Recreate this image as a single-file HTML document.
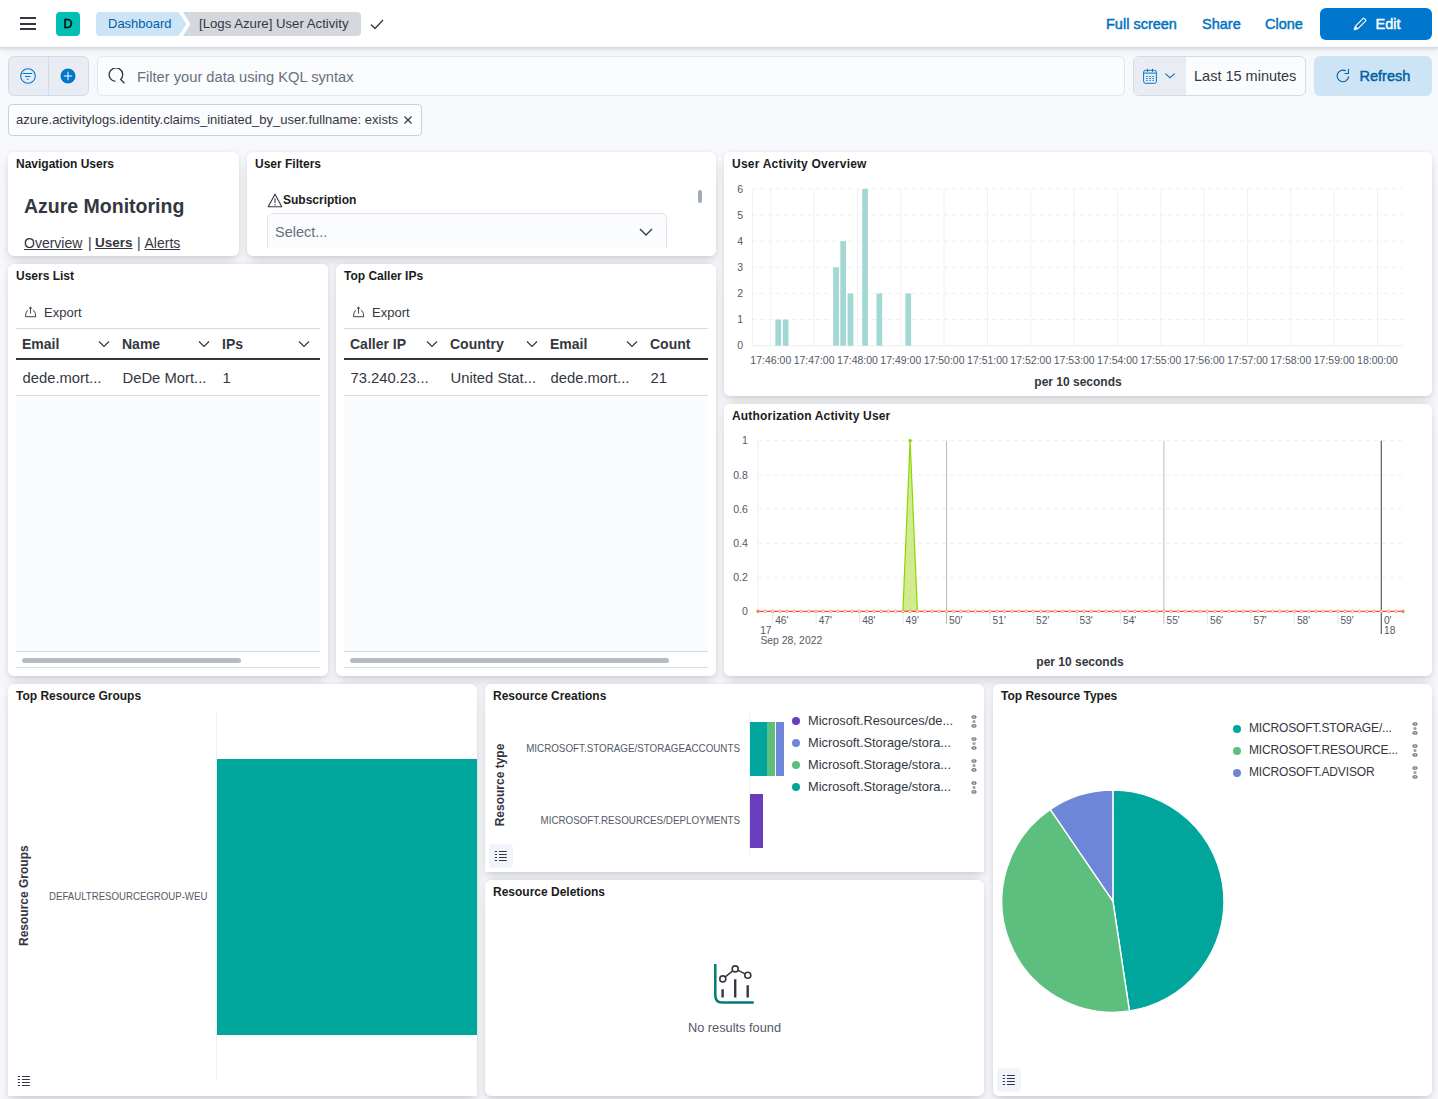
<!DOCTYPE html>
<html><head><meta charset="utf-8">
<style>
*{box-sizing:border-box;margin:0;padding:0}
html,body{width:1438px;height:1099px;overflow:hidden}
body{background:#f7f8fc;font-family:"Liberation Sans",sans-serif;color:#343741;position:relative}
.a{position:absolute;white-space:nowrap}
#hdr{position:absolute;left:0;top:0;width:1438px;height:48px;background:#fff;border-bottom:1px solid #d3dae6;box-shadow:0 1px 2px rgba(0,0,0,.1),0 3px 7px rgba(0,0,0,.05);z-index:5}
.pn{position:absolute;background:#fff;border-radius:6px;box-shadow:0 .9px 4px -1px rgba(0,0,0,.08),0 2.6px 8px -1px rgba(0,0,0,.06),0 5.7px 12px -1px rgba(0,0,0,.05),0 15px 15px -1px rgba(0,0,0,.04);overflow:hidden}
.pt{position:absolute;left:8px;top:5px;font-size:12px;font-weight:700;color:#1a1c21;line-height:14px}
.lnk{color:#0071c2;font-weight:400;font-size:14.5px;-webkit-text-stroke:.45px #0071c2}
</style></head><body>
<div id="hdr">
  <!-- hamburger -->
  <div class="a" style="left:20px;top:17px;width:16px;height:2px;background:#343741"></div>
  <div class="a" style="left:20px;top:23px;width:16px;height:2px;background:#343741"></div>
  <div class="a" style="left:20px;top:28px;width:16px;height:2px;background:#343741"></div>
  <!-- avatar -->
  <div class="a" style="left:56px;top:12px;width:24px;height:24px;border-radius:4px;background:#00bfb3;color:#000;font-size:12.5px;line-height:24px;text-align:center;-webkit-text-stroke:.35px #000">D</div>
  <!-- breadcrumbs -->
  <svg class="a" style="left:96px;top:12px" width="270" height="24" viewBox="0 0 270 24">
    <path d="M4 0 H82.7 L90.4 12 L82.7 24 H4 A4 4 0 0 1 0 20 V4 A4 4 0 0 1 4 0Z" fill="#cce4f5"/>
    <path d="M87 0 H261 A4 4 0 0 1 265 4 V20 A4 4 0 0 1 261 24 H87 L94.5 12 Z" fill="#d4d7dc"/>
  </svg>
  <div class="a" style="left:108px;top:16px;font-size:13px;line-height:16px;color:#0061a6">Dashboard</div>
  <div class="a" style="left:199px;top:16px;font-size:13.2px;line-height:16px;color:#343741">[Logs Azure] User Activity</div>
  <svg class="a" style="left:369px;top:18px" width="16" height="12" viewBox="0 0 16 12"><path d="M2 6.5 L6 10.5 L14 2" fill="none" stroke="#343741" stroke-width="1.3"/></svg>
  <!-- right links -->
  <div class="a lnk" style="left:1106px;top:16px;line-height:16px">Full screen</div>
  <div class="a lnk" style="left:1202px;top:16px;line-height:16px">Share</div>
  <div class="a lnk" style="left:1265px;top:16px;line-height:16px">Clone</div>
  <div class="a" style="left:1320px;top:8px;width:112px;height:32px;border-radius:6px;background:#0077cc"></div>
  <svg class="a" style="left:1351px;top:16px" width="17" height="17" viewBox="0 0 17 17"><g transform="rotate(-45 8.5 8.5)"><rect x="4.2" y="6.7" width="12" height="3.6" rx=".7" fill="none" stroke="#fff" stroke-width="1.1"/><path d="M4.2 6.7 L0.8 8.5 L4.2 10.3 Z" fill="#fff" stroke="#fff" stroke-width=".8" stroke-linejoin="round"/></g></svg>
  <div class="a" style="left:1375.5px;top:16px;line-height:16px;font-size:14.5px;color:#fff;-webkit-text-stroke:.45px #fff">Edit</div>
</div>

<!-- query bar -->
<div class="a" style="left:8px;top:56px;width:81px;height:40px;border-radius:6px;background:#e9edf3;border:1px solid #d3dae6"></div>
<div class="a" style="left:48px;top:56px;width:1px;height:40px;background:#d3dae6"></div>
<svg class="a" style="left:20px;top:68px" width="16" height="16" viewBox="0 0 16 16"><circle cx="8" cy="8" r="7.3" fill="none" stroke="#0077cc" stroke-width="1.1"/><path d="M2.7 5.5 H12.3 M5 8.5 H10.5 M6.8 11.3 H8.6" stroke="#0077cc" stroke-width="1.1"/></svg>
<svg class="a" style="left:60px;top:68px" width="16" height="16" viewBox="0 0 16 16"><circle cx="8" cy="8" r="7.5" fill="#0077cc"/><path d="M8 3.8 V12.2 M3.8 8 H12.2" stroke="#fff" stroke-width="1"/></svg>
<div class="a" style="left:97px;top:56px;width:1028px;height:40px;border-radius:6px;background:#fbfcfd;border:1px solid #e3e6ee"></div>
<svg class="a" style="left:108px;top:68px" width="18" height="18" viewBox="0 0 18 18"><path d="M7.4 13.4 A6.75 6.75 0 1 1 12.67 11.47 L16.5 15.3" fill="none" stroke="#343741" stroke-width="1.3"/></svg>
<div class="a" style="left:137px;top:69px;font-size:14.7px;line-height:17px;color:#69707d">Filter your data using KQL syntax</div>
<div class="a" style="left:1133px;top:56px;width:173px;height:40px;border-radius:6px;background:#fbfcfd;border:1px solid #d3dae6;overflow:hidden"><div style="position:absolute;left:0;top:0;width:52px;height:40px;background:#e9edf3"></div></div>
<svg class="a" style="left:1142px;top:68px" width="16" height="16" viewBox="0 0 16 16"><rect x="1.6" y="2.3" width="12.8" height="13" rx="2" fill="none" stroke="#0077cc" stroke-width="1"/><path d="M1.6 5.1 H14.4 M5.5 0.8 V3.9 M10.5 0.8 V3.9" stroke="#0077cc" stroke-width="1"/><path d="M4.1 8.5h1.6M7.2 8.5h1.6M10.4 8.5h1.6M4.1 10.5h1.6M7.2 10.5h1.6M10.4 10.5h1.6M4.1 12.4h1.6M7.2 12.4h1.6M10.4 12.4h1.6" stroke="#0077cc" stroke-width=".9"/></svg>
<svg class="a" style="left:1163px;top:71px" width="14" height="10" viewBox="0 0 14 10"><path d="M2.3 2.6 L7 6.7 L11.6 2.6" fill="none" stroke="#0077cc" stroke-width="1.1"/></svg>
<div class="a" style="left:1194px;top:68px;font-size:14.5px;line-height:17px;color:#343741">Last 15 minutes</div>
<div class="a" style="left:1314px;top:56px;width:118px;height:40px;border-radius:6px;background:#cce4f5"></div>
<svg class="a" style="left:1335px;top:68px" width="16" height="16" viewBox="0 0 16 16"><path d="M10.8 2.88 A5.8 5.8 0 1 0 13.68 8.4" fill="none" stroke="#0061a6" stroke-width="1.1"/><path d="M13.5 1 V5.5 H9.5" fill="none" stroke="#0061a6" stroke-width="1.1"/></svg>
<div class="a" style="left:1359.5px;top:68px;font-size:14.5px;line-height:17px;color:#0061a6;-webkit-text-stroke:.45px #0061a6">Refresh</div>

<!-- filter pill -->
<div class="a" style="left:8px;top:104px;width:414px;height:32px;border-radius:4px;background:#fbfcfd;border:1px solid #c9d0dc"></div>
<div class="a" style="left:16px;top:112px;font-size:13px;line-height:16px;color:#343741">azure.activitylogs.identity.claims_initiated_by_user.fullname: exists</div>
<svg class="a" style="left:402px;top:114px" width="12" height="12" viewBox="0 0 12 12"><path d="M2.5 2.5 L9.5 9.5 M9.5 2.5 L2.5 9.5" stroke="#343741" stroke-width="1.2"/></svg>

<!-- panels -->
<div class="pn" style="left:8px;top:152px;width:231px;height:104px"><div class="pt">Navigation Users</div>
  <div class="a" style="left:16px;top:43px;font-size:19.5px;line-height:22px;font-weight:700;color:#343741">Azure Monitoring</div>
  <div class="a" style="left:16px;top:83px;font-size:14px;line-height:16px;color:#343741;text-decoration:underline">Overview</div>
  <div class="a" style="left:80px;top:83px;font-size:14px;line-height:16px;color:#343741">|</div>
  <div class="a" style="left:87px;top:83px;font-size:13.5px;line-height:16px;color:#343741;font-weight:700;text-decoration:underline">Users</div>
  <div class="a" style="left:129px;top:83px;font-size:14px;line-height:16px;color:#343741">|</div>
  <div class="a" style="left:136.5px;top:83px;font-size:14px;line-height:16px;color:#343741;text-decoration:underline">Alerts</div>
</div>
<div class="pn" style="left:247px;top:152px;width:469px;height:104px"><div class="pt">User Filters</div>
  <svg class="a" style="left:20px;top:41px" width="16" height="15" viewBox="0 0 16 15"><path d="M8 1.2 L14.8 13.8 H1.2 Z" fill="none" stroke="#343741" stroke-width="1.1" stroke-linejoin="round"/><path d="M8 5.5 V10" stroke="#343741" stroke-width="1.1"/><circle cx="8" cy="11.8" r="0.7" fill="#343741"/></svg>
  <div class="a" style="left:36px;top:41px;font-size:12px;line-height:14px;font-weight:700;color:#1a1c21">Subscription</div>
  <div class="a" style="left:0;top:0;width:469px;height:96px;overflow:hidden">
    <div class="a" style="left:20px;top:61px;width:400px;height:40px;border:1px solid #dfe3eb;border-radius:6px;background:#fbfcfd"></div>
    <div class="a" style="left:28px;top:72px;font-size:14.5px;line-height:17px;color:#69707d">Select...</div>
    <svg class="a" style="left:391px;top:74px" width="16" height="12" viewBox="0 0 16 12"><path d="M2 3 L8 9 L14 3" fill="none" stroke="#343741" stroke-width="1.4"/></svg>
  </div>
  <div class="a" style="left:451px;top:38px;width:4px;height:13px;border-radius:2px;background:#a2abba"></div>
</div>
<div class="pn" style="left:724px;top:152px;width:708px;height:244px"><div class="pt" style="letter-spacing:.23px">User Activity Overview</div><svg class="a" style="left:0;top:0" width="708" height="244" viewBox="724 152 708 244" font-family="Liberation Sans"><line x1="752.4" y1="188.8" x2="1402.9" y2="188.8" stroke="#eceef2" stroke-width="1" stroke-dasharray="4 4"/><line x1="752.4" y1="215.0" x2="1402.9" y2="215.0" stroke="#eceef2" stroke-width="1" stroke-dasharray="4 4"/><line x1="752.4" y1="241.1" x2="1402.9" y2="241.1" stroke="#eceef2" stroke-width="1" stroke-dasharray="4 4"/><line x1="752.4" y1="267.2" x2="1402.9" y2="267.2" stroke="#eceef2" stroke-width="1" stroke-dasharray="4 4"/><line x1="752.4" y1="293.4" x2="1402.9" y2="293.4" stroke="#eceef2" stroke-width="1" stroke-dasharray="4 4"/><line x1="752.4" y1="319.5" x2="1402.9" y2="319.5" stroke="#eceef2" stroke-width="1" stroke-dasharray="4 4"/><line x1="752.4" y1="345.7" x2="1402.9" y2="345.7" stroke="#eceef2" stroke-width="1" stroke-dasharray="4 4"/><line x1="752.4" y1="188.8" x2="752.4" y2="345.7" stroke="#eef0f3" stroke-width="1"/><line x1="770.8" y1="188.8" x2="770.8" y2="345.7" stroke="#eef0f3" stroke-width="1"/><line x1="814.1" y1="188.8" x2="814.1" y2="345.7" stroke="#eef0f3" stroke-width="1"/><line x1="857.5" y1="188.8" x2="857.5" y2="345.7" stroke="#eef0f3" stroke-width="1"/><line x1="900.8" y1="188.8" x2="900.8" y2="345.7" stroke="#eef0f3" stroke-width="1"/><line x1="944.1" y1="188.8" x2="944.1" y2="345.7" stroke="#eef0f3" stroke-width="1"/><line x1="987.5" y1="188.8" x2="987.5" y2="345.7" stroke="#eef0f3" stroke-width="1"/><line x1="1030.8" y1="188.8" x2="1030.8" y2="345.7" stroke="#eef0f3" stroke-width="1"/><line x1="1074.2" y1="188.8" x2="1074.2" y2="345.7" stroke="#eef0f3" stroke-width="1"/><line x1="1117.5" y1="188.8" x2="1117.5" y2="345.7" stroke="#eef0f3" stroke-width="1"/><line x1="1160.8" y1="188.8" x2="1160.8" y2="345.7" stroke="#eef0f3" stroke-width="1"/><line x1="1204.2" y1="188.8" x2="1204.2" y2="345.7" stroke="#eef0f3" stroke-width="1"/><line x1="1247.5" y1="188.8" x2="1247.5" y2="345.7" stroke="#eef0f3" stroke-width="1"/><line x1="1290.8" y1="188.8" x2="1290.8" y2="345.7" stroke="#eef0f3" stroke-width="1"/><line x1="1334.2" y1="188.8" x2="1334.2" y2="345.7" stroke="#eef0f3" stroke-width="1"/><line x1="1377.5" y1="188.8" x2="1377.5" y2="345.7" stroke="#eef0f3" stroke-width="1"/><line x1="752.4" y1="345.7" x2="1402.9" y2="345.7" stroke="#eef0f3" stroke-width="1"/><rect x="775.4" y="319.6" width="5.7" height="26.1" fill="#a1d8d3"/><rect x="782.8" y="319.6" width="5.7" height="26.1" fill="#a1d8d3"/><rect x="833.2" y="267.2" width="5.7" height="78.4" fill="#a1d8d3"/><rect x="840.3" y="241.1" width="5.7" height="104.6" fill="#a1d8d3"/><rect x="847.6" y="293.4" width="5.7" height="52.3" fill="#a1d8d3"/><rect x="862.2" y="188.8" width="5.7" height="156.9" fill="#a1d8d3"/><rect x="876.5" y="293.4" width="5.7" height="52.3" fill="#a1d8d3"/><rect x="905.4" y="293.4" width="5.7" height="52.3" fill="#a1d8d3"/><text x="743" y="192.5" text-anchor="end" font-size="10.5" fill="#535966">6</text><text x="743" y="218.7" text-anchor="end" font-size="10.5" fill="#535966">5</text><text x="743" y="244.8" text-anchor="end" font-size="10.5" fill="#535966">4</text><text x="743" y="270.9" text-anchor="end" font-size="10.5" fill="#535966">3</text><text x="743" y="297.1" text-anchor="end" font-size="10.5" fill="#535966">2</text><text x="743" y="323.2" text-anchor="end" font-size="10.5" fill="#535966">1</text><text x="743" y="349.4" text-anchor="end" font-size="10.5" fill="#535966">0</text><text x="770.8" y="363.8" text-anchor="middle" font-size="10.5" fill="#535966">17:46:00</text><text x="814.1" y="363.8" text-anchor="middle" font-size="10.5" fill="#535966">17:47:00</text><text x="857.5" y="363.8" text-anchor="middle" font-size="10.5" fill="#535966">17:48:00</text><text x="900.8" y="363.8" text-anchor="middle" font-size="10.5" fill="#535966">17:49:00</text><text x="944.1" y="363.8" text-anchor="middle" font-size="10.5" fill="#535966">17:50:00</text><text x="987.5" y="363.8" text-anchor="middle" font-size="10.5" fill="#535966">17:51:00</text><text x="1030.8" y="363.8" text-anchor="middle" font-size="10.5" fill="#535966">17:52:00</text><text x="1074.2" y="363.8" text-anchor="middle" font-size="10.5" fill="#535966">17:53:00</text><text x="1117.5" y="363.8" text-anchor="middle" font-size="10.5" fill="#535966">17:54:00</text><text x="1160.8" y="363.8" text-anchor="middle" font-size="10.5" fill="#535966">17:55:00</text><text x="1204.2" y="363.8" text-anchor="middle" font-size="10.5" fill="#535966">17:56:00</text><text x="1247.5" y="363.8" text-anchor="middle" font-size="10.5" fill="#535966">17:57:00</text><text x="1290.8" y="363.8" text-anchor="middle" font-size="10.5" fill="#535966">17:58:00</text><text x="1334.2" y="363.8" text-anchor="middle" font-size="10.5" fill="#535966">17:59:00</text><text x="1377.5" y="363.8" text-anchor="middle" font-size="10.5" fill="#535966">18:00:00</text><text x="1078" y="385.9" text-anchor="middle" font-size="12" font-weight="700" fill="#343741">per 10 seconds</text></svg></div>
<div class="pn" style="left:8px;top:264px;width:320px;height:412px"><div class="pt">Users List</div><svg class="a" style="left:16px;top:42px" width="13" height="12" viewBox="0 0 13 12"><path d="M4.1 4.3 Q2.3 4.7 1.9 7.5 L1.5 10.7 H11.7 L11.3 7.5 Q10.9 4.9 8.9 4.3" fill="none" stroke="#343741" stroke-width=".95" stroke-linejoin="round"/><path d="M6.5 7.6 V1.4 M4.9 2.6 L6.5 1.1 L8.1 2.6" fill="none" stroke="#343741" stroke-width=".95"/></svg><div class="a" style="left:36px;top:40.5px;font-size:13px;line-height:15px;color:#343741">Export</div><div class="a" style="left:8px;top:64px;width:304px;height:1px;background:#d3dae6"></div><div class="a" style="left:8px;top:94px;width:304px;height:2px;background:#343741"></div><div class="a" style="left:8px;top:96px;width:304px;height:292px;background:#fafbfd"></div><div class="a" style="left:8px;top:96px;width:304px;height:36px;background:#fff;border-bottom:1px solid #d3dae6"></div><div class="a" style="left:8px;top:387px;width:304px;height:1px;background:#d3dae6"></div><div class="a" style="left:8px;top:403px;width:304px;height:1px;background:#d3dae6"></div><div class="a" style="left:14px;top:394px;width:219px;height:5px;border-radius:3px;background:#b6bcc6"></div><div class="a" style="left:14px;top:72px;font-size:14px;line-height:16px;font-weight:700;color:#343741">Email</div><div class="a" style="left:14.5px;top:106px;font-size:14.8px;line-height:17px;color:#343741">dede.mort...</div><div class="a" style="left:114px;top:72px;font-size:14px;line-height:16px;font-weight:700;color:#343741">Name</div><div class="a" style="left:114.5px;top:106px;font-size:14.8px;line-height:17px;color:#343741">DeDe Mort...</div><div class="a" style="left:214px;top:72px;font-size:14px;line-height:16px;font-weight:700;color:#343741">IPs</div><div class="a" style="left:214.5px;top:106px;font-size:14.8px;line-height:17px;color:#343741">1</div><svg class="a" style="left:90px;top:76px" width="12" height="8" viewBox="0 0 12 8"><path d="M1 1.5 L6 6.5 L11 1.5" fill="none" stroke="#343741" stroke-width="1.2"/></svg><svg class="a" style="left:190px;top:76px" width="12" height="8" viewBox="0 0 12 8"><path d="M1 1.5 L6 6.5 L11 1.5" fill="none" stroke="#343741" stroke-width="1.2"/></svg><svg class="a" style="left:290px;top:76px" width="12" height="8" viewBox="0 0 12 8"><path d="M1 1.5 L6 6.5 L11 1.5" fill="none" stroke="#343741" stroke-width="1.2"/></svg></div>
<div class="pn" style="left:336px;top:264px;width:380px;height:412px"><div class="pt">Top Caller IPs</div><svg class="a" style="left:16px;top:42px" width="13" height="12" viewBox="0 0 13 12"><path d="M4.1 4.3 Q2.3 4.7 1.9 7.5 L1.5 10.7 H11.7 L11.3 7.5 Q10.9 4.9 8.9 4.3" fill="none" stroke="#343741" stroke-width=".95" stroke-linejoin="round"/><path d="M6.5 7.6 V1.4 M4.9 2.6 L6.5 1.1 L8.1 2.6" fill="none" stroke="#343741" stroke-width=".95"/></svg><div class="a" style="left:36px;top:40.5px;font-size:13px;line-height:15px;color:#343741">Export</div><div class="a" style="left:8px;top:64px;width:364px;height:1px;background:#d3dae6"></div><div class="a" style="left:8px;top:94px;width:364px;height:2px;background:#343741"></div><div class="a" style="left:8px;top:96px;width:364px;height:292px;background:#fafbfd"></div><div class="a" style="left:8px;top:96px;width:364px;height:36px;background:#fff;border-bottom:1px solid #d3dae6"></div><div class="a" style="left:8px;top:387px;width:364px;height:1px;background:#d3dae6"></div><div class="a" style="left:8px;top:403px;width:364px;height:1px;background:#d3dae6"></div><div class="a" style="left:14px;top:394px;width:319px;height:5px;border-radius:3px;background:#b6bcc6"></div><div class="a" style="left:14px;top:72px;font-size:14px;line-height:16px;font-weight:700;color:#343741">Caller IP</div><div class="a" style="left:14.5px;top:106px;font-size:14.8px;line-height:17px;color:#343741">73.240.23...</div><div class="a" style="left:114px;top:72px;font-size:14px;line-height:16px;font-weight:700;color:#343741">Country</div><div class="a" style="left:114.5px;top:106px;font-size:14.8px;line-height:17px;color:#343741">United Stat...</div><div class="a" style="left:214px;top:72px;font-size:14px;line-height:16px;font-weight:700;color:#343741">Email</div><div class="a" style="left:214.5px;top:106px;font-size:14.8px;line-height:17px;color:#343741">dede.mort...</div><div class="a" style="left:314px;top:72px;font-size:14px;line-height:16px;font-weight:700;color:#343741">Count</div><div class="a" style="left:314.5px;top:106px;font-size:14.8px;line-height:17px;color:#343741">21</div><svg class="a" style="left:90px;top:76px" width="12" height="8" viewBox="0 0 12 8"><path d="M1 1.5 L6 6.5 L11 1.5" fill="none" stroke="#343741" stroke-width="1.2"/></svg><svg class="a" style="left:190px;top:76px" width="12" height="8" viewBox="0 0 12 8"><path d="M1 1.5 L6 6.5 L11 1.5" fill="none" stroke="#343741" stroke-width="1.2"/></svg><svg class="a" style="left:290px;top:76px" width="12" height="8" viewBox="0 0 12 8"><path d="M1 1.5 L6 6.5 L11 1.5" fill="none" stroke="#343741" stroke-width="1.2"/></svg></div>
<div class="pn" style="left:724px;top:404px;width:708px;height:272px"><div class="pt" style="letter-spacing:.18px">Authorization Activity User</div><svg class="a" style="left:0;top:0" width="708" height="272" viewBox="724 404 708 272" font-family="Liberation Sans"><line x1="757.9" y1="440.8" x2="1403.3" y2="440.8" stroke="#eceef2" stroke-width="1" stroke-dasharray="4 4"/><line x1="757.9" y1="474.9" x2="1403.3" y2="474.9" stroke="#eceef2" stroke-width="1" stroke-dasharray="4 4"/><line x1="757.9" y1="509.0" x2="1403.3" y2="509.0" stroke="#eceef2" stroke-width="1" stroke-dasharray="4 4"/><line x1="757.9" y1="543.2" x2="1403.3" y2="543.2" stroke="#eceef2" stroke-width="1" stroke-dasharray="4 4"/><line x1="757.9" y1="577.3" x2="1403.3" y2="577.3" stroke="#eceef2" stroke-width="1" stroke-dasharray="4 4"/><line x1="757.9" y1="611.4" x2="1403.3" y2="611.4" stroke="#eceef2" stroke-width="1" stroke-dasharray="4 4"/><line x1="757.9" y1="440.8" x2="757.9" y2="611.4" stroke="#eef0f3" stroke-width="1"/><line x1="772.6" y1="611.4" x2="772.6" y2="623.8" stroke="#e4e6ea" stroke-width="1"/><text x="775.2" y="623.8" font-size="10.2" fill="#535966">46'</text><line x1="816.1" y1="611.4" x2="816.1" y2="623.8" stroke="#e4e6ea" stroke-width="1"/><text x="818.7" y="623.8" font-size="10.2" fill="#535966">47'</text><line x1="859.6" y1="611.4" x2="859.6" y2="623.8" stroke="#e4e6ea" stroke-width="1"/><text x="862.2" y="623.8" font-size="10.2" fill="#535966">48'</text><line x1="903.0" y1="611.4" x2="903.0" y2="623.8" stroke="#e4e6ea" stroke-width="1"/><text x="905.6" y="623.8" font-size="10.2" fill="#535966">49'</text><line x1="946.5" y1="440.8" x2="946.5" y2="623.8" stroke="#b9bcc0" stroke-width="1"/><text x="949.1" y="623.8" font-size="10.2" fill="#535966">50'</text><line x1="990.0" y1="611.4" x2="990.0" y2="623.8" stroke="#e4e6ea" stroke-width="1"/><text x="992.6" y="623.8" font-size="10.2" fill="#535966">51'</text><line x1="1033.5" y1="611.4" x2="1033.5" y2="623.8" stroke="#e4e6ea" stroke-width="1"/><text x="1036.1" y="623.8" font-size="10.2" fill="#535966">52'</text><line x1="1077.0" y1="611.4" x2="1077.0" y2="623.8" stroke="#e4e6ea" stroke-width="1"/><text x="1079.5" y="623.8" font-size="10.2" fill="#535966">53'</text><line x1="1120.4" y1="611.4" x2="1120.4" y2="623.8" stroke="#e4e6ea" stroke-width="1"/><text x="1123.0" y="623.8" font-size="10.2" fill="#535966">54'</text><line x1="1163.9" y1="440.8" x2="1163.9" y2="623.8" stroke="#b9bcc0" stroke-width="1"/><text x="1166.5" y="623.8" font-size="10.2" fill="#535966">55'</text><line x1="1207.4" y1="611.4" x2="1207.4" y2="623.8" stroke="#e4e6ea" stroke-width="1"/><text x="1210.0" y="623.8" font-size="10.2" fill="#535966">56'</text><line x1="1250.9" y1="611.4" x2="1250.9" y2="623.8" stroke="#e4e6ea" stroke-width="1"/><text x="1253.5" y="623.8" font-size="10.2" fill="#535966">57'</text><line x1="1294.3" y1="611.4" x2="1294.3" y2="623.8" stroke="#e4e6ea" stroke-width="1"/><text x="1296.9" y="623.8" font-size="10.2" fill="#535966">58'</text><line x1="1337.8" y1="611.4" x2="1337.8" y2="623.8" stroke="#e4e6ea" stroke-width="1"/><text x="1340.4" y="623.8" font-size="10.2" fill="#535966">59'</text><line x1="1381.3" y1="440.8" x2="1381.3" y2="634" stroke="#5a5d63" stroke-width="1.2"/><text x="1383.9" y="623.8" font-size="10.2" fill="#535966">0'</text><text x="1384" y="633.8" font-size="10.2" fill="#535966">18</text><text x="760.2" y="633.8" font-size="10.2" fill="#535966">17</text><text x="760.4" y="643.8" font-size="10.4" fill="#535966">Sep 28, 2022</text><text x="747.8" y="444.4" text-anchor="end" font-size="10.5" fill="#535966">1</text><text x="747.8" y="478.5" text-anchor="end" font-size="10.5" fill="#535966">0.8</text><text x="747.8" y="512.6" text-anchor="end" font-size="10.5" fill="#535966">0.6</text><text x="747.8" y="546.8" text-anchor="end" font-size="10.5" fill="#535966">0.4</text><text x="747.8" y="580.9" text-anchor="end" font-size="10.5" fill="#535966">0.2</text><text x="747.8" y="615.0" text-anchor="end" font-size="10.5" fill="#535966">0</text><path d="M902.9 611.4 L910.1 440.8 L917.4 611.4 Z" fill="#d0ec8f" stroke="#8fd400" stroke-width="1.2" stroke-linejoin="round"/><circle cx="910.1" cy="440.8" r="1.8" fill="#8fd400"/><line x1="757.9" y1="611.4" x2="1403" y2="611.4" stroke="#f04e3e" stroke-width="1.1"/><circle cx="758.00" cy="611.4" r="1.35" fill="#ef8a5d" stroke="#ef8a5d" stroke-width=".9"/><circle cx="765.25" cy="611.4" r="1.35" fill="#fff" stroke="#ef8a5d" stroke-width=".9"/><circle cx="772.49" cy="611.4" r="1.35" fill="#fff" stroke="#ef8a5d" stroke-width=".9"/><circle cx="779.74" cy="611.4" r="1.35" fill="#fff" stroke="#ef8a5d" stroke-width=".9"/><circle cx="786.99" cy="611.4" r="1.35" fill="#fff" stroke="#ef8a5d" stroke-width=".9"/><circle cx="794.24" cy="611.4" r="1.35" fill="#fff" stroke="#ef8a5d" stroke-width=".9"/><circle cx="801.48" cy="611.4" r="1.35" fill="#fff" stroke="#ef8a5d" stroke-width=".9"/><circle cx="808.73" cy="611.4" r="1.35" fill="#fff" stroke="#ef8a5d" stroke-width=".9"/><circle cx="815.98" cy="611.4" r="1.35" fill="#fff" stroke="#ef8a5d" stroke-width=".9"/><circle cx="823.22" cy="611.4" r="1.35" fill="#fff" stroke="#ef8a5d" stroke-width=".9"/><circle cx="830.47" cy="611.4" r="1.35" fill="#fff" stroke="#ef8a5d" stroke-width=".9"/><circle cx="837.72" cy="611.4" r="1.35" fill="#fff" stroke="#ef8a5d" stroke-width=".9"/><circle cx="844.97" cy="611.4" r="1.35" fill="#fff" stroke="#ef8a5d" stroke-width=".9"/><circle cx="852.21" cy="611.4" r="1.35" fill="#fff" stroke="#ef8a5d" stroke-width=".9"/><circle cx="859.46" cy="611.4" r="1.35" fill="#fff" stroke="#ef8a5d" stroke-width=".9"/><circle cx="866.71" cy="611.4" r="1.35" fill="#fff" stroke="#ef8a5d" stroke-width=".9"/><circle cx="873.96" cy="611.4" r="1.35" fill="#fff" stroke="#ef8a5d" stroke-width=".9"/><circle cx="881.20" cy="611.4" r="1.35" fill="#fff" stroke="#ef8a5d" stroke-width=".9"/><circle cx="888.45" cy="611.4" r="1.35" fill="#fff" stroke="#ef8a5d" stroke-width=".9"/><circle cx="895.70" cy="611.4" r="1.35" fill="#fff" stroke="#ef8a5d" stroke-width=".9"/><circle cx="902.94" cy="611.4" r="1.35" fill="#fff" stroke="#ef8a5d" stroke-width=".9"/><circle cx="910.19" cy="611.4" r="1.35" fill="#fff" stroke="#ef8a5d" stroke-width=".9"/><circle cx="917.44" cy="611.4" r="1.35" fill="#fff" stroke="#ef8a5d" stroke-width=".9"/><circle cx="924.69" cy="611.4" r="1.35" fill="#fff" stroke="#ef8a5d" stroke-width=".9"/><circle cx="931.93" cy="611.4" r="1.35" fill="#fff" stroke="#ef8a5d" stroke-width=".9"/><circle cx="939.18" cy="611.4" r="1.35" fill="#fff" stroke="#ef8a5d" stroke-width=".9"/><circle cx="946.43" cy="611.4" r="1.35" fill="#fff" stroke="#ef8a5d" stroke-width=".9"/><circle cx="953.67" cy="611.4" r="1.35" fill="#fff" stroke="#ef8a5d" stroke-width=".9"/><circle cx="960.92" cy="611.4" r="1.35" fill="#fff" stroke="#ef8a5d" stroke-width=".9"/><circle cx="968.17" cy="611.4" r="1.35" fill="#fff" stroke="#ef8a5d" stroke-width=".9"/><circle cx="975.42" cy="611.4" r="1.35" fill="#fff" stroke="#ef8a5d" stroke-width=".9"/><circle cx="982.66" cy="611.4" r="1.35" fill="#fff" stroke="#ef8a5d" stroke-width=".9"/><circle cx="989.91" cy="611.4" r="1.35" fill="#fff" stroke="#ef8a5d" stroke-width=".9"/><circle cx="997.16" cy="611.4" r="1.35" fill="#fff" stroke="#ef8a5d" stroke-width=".9"/><circle cx="1004.40" cy="611.4" r="1.35" fill="#fff" stroke="#ef8a5d" stroke-width=".9"/><circle cx="1011.65" cy="611.4" r="1.35" fill="#fff" stroke="#ef8a5d" stroke-width=".9"/><circle cx="1018.90" cy="611.4" r="1.35" fill="#fff" stroke="#ef8a5d" stroke-width=".9"/><circle cx="1026.15" cy="611.4" r="1.35" fill="#fff" stroke="#ef8a5d" stroke-width=".9"/><circle cx="1033.39" cy="611.4" r="1.35" fill="#fff" stroke="#ef8a5d" stroke-width=".9"/><circle cx="1040.64" cy="611.4" r="1.35" fill="#fff" stroke="#ef8a5d" stroke-width=".9"/><circle cx="1047.89" cy="611.4" r="1.35" fill="#fff" stroke="#ef8a5d" stroke-width=".9"/><circle cx="1055.13" cy="611.4" r="1.35" fill="#fff" stroke="#ef8a5d" stroke-width=".9"/><circle cx="1062.38" cy="611.4" r="1.35" fill="#fff" stroke="#ef8a5d" stroke-width=".9"/><circle cx="1069.63" cy="611.4" r="1.35" fill="#fff" stroke="#ef8a5d" stroke-width=".9"/><circle cx="1076.88" cy="611.4" r="1.35" fill="#fff" stroke="#ef8a5d" stroke-width=".9"/><circle cx="1084.12" cy="611.4" r="1.35" fill="#fff" stroke="#ef8a5d" stroke-width=".9"/><circle cx="1091.37" cy="611.4" r="1.35" fill="#fff" stroke="#ef8a5d" stroke-width=".9"/><circle cx="1098.62" cy="611.4" r="1.35" fill="#fff" stroke="#ef8a5d" stroke-width=".9"/><circle cx="1105.87" cy="611.4" r="1.35" fill="#fff" stroke="#ef8a5d" stroke-width=".9"/><circle cx="1113.11" cy="611.4" r="1.35" fill="#fff" stroke="#ef8a5d" stroke-width=".9"/><circle cx="1120.36" cy="611.4" r="1.35" fill="#fff" stroke="#ef8a5d" stroke-width=".9"/><circle cx="1127.61" cy="611.4" r="1.35" fill="#fff" stroke="#ef8a5d" stroke-width=".9"/><circle cx="1134.85" cy="611.4" r="1.35" fill="#fff" stroke="#ef8a5d" stroke-width=".9"/><circle cx="1142.10" cy="611.4" r="1.35" fill="#fff" stroke="#ef8a5d" stroke-width=".9"/><circle cx="1149.35" cy="611.4" r="1.35" fill="#fff" stroke="#ef8a5d" stroke-width=".9"/><circle cx="1156.60" cy="611.4" r="1.35" fill="#fff" stroke="#ef8a5d" stroke-width=".9"/><circle cx="1163.84" cy="611.4" r="1.35" fill="#fff" stroke="#ef8a5d" stroke-width=".9"/><circle cx="1171.09" cy="611.4" r="1.35" fill="#fff" stroke="#ef8a5d" stroke-width=".9"/><circle cx="1178.34" cy="611.4" r="1.35" fill="#fff" stroke="#ef8a5d" stroke-width=".9"/><circle cx="1185.58" cy="611.4" r="1.35" fill="#fff" stroke="#ef8a5d" stroke-width=".9"/><circle cx="1192.83" cy="611.4" r="1.35" fill="#fff" stroke="#ef8a5d" stroke-width=".9"/><circle cx="1200.08" cy="611.4" r="1.35" fill="#fff" stroke="#ef8a5d" stroke-width=".9"/><circle cx="1207.33" cy="611.4" r="1.35" fill="#fff" stroke="#ef8a5d" stroke-width=".9"/><circle cx="1214.57" cy="611.4" r="1.35" fill="#fff" stroke="#ef8a5d" stroke-width=".9"/><circle cx="1221.82" cy="611.4" r="1.35" fill="#fff" stroke="#ef8a5d" stroke-width=".9"/><circle cx="1229.07" cy="611.4" r="1.35" fill="#fff" stroke="#ef8a5d" stroke-width=".9"/><circle cx="1236.31" cy="611.4" r="1.35" fill="#fff" stroke="#ef8a5d" stroke-width=".9"/><circle cx="1243.56" cy="611.4" r="1.35" fill="#fff" stroke="#ef8a5d" stroke-width=".9"/><circle cx="1250.81" cy="611.4" r="1.35" fill="#fff" stroke="#ef8a5d" stroke-width=".9"/><circle cx="1258.06" cy="611.4" r="1.35" fill="#fff" stroke="#ef8a5d" stroke-width=".9"/><circle cx="1265.30" cy="611.4" r="1.35" fill="#fff" stroke="#ef8a5d" stroke-width=".9"/><circle cx="1272.55" cy="611.4" r="1.35" fill="#fff" stroke="#ef8a5d" stroke-width=".9"/><circle cx="1279.80" cy="611.4" r="1.35" fill="#fff" stroke="#ef8a5d" stroke-width=".9"/><circle cx="1287.04" cy="611.4" r="1.35" fill="#fff" stroke="#ef8a5d" stroke-width=".9"/><circle cx="1294.29" cy="611.4" r="1.35" fill="#fff" stroke="#ef8a5d" stroke-width=".9"/><circle cx="1301.54" cy="611.4" r="1.35" fill="#fff" stroke="#ef8a5d" stroke-width=".9"/><circle cx="1308.79" cy="611.4" r="1.35" fill="#fff" stroke="#ef8a5d" stroke-width=".9"/><circle cx="1316.03" cy="611.4" r="1.35" fill="#fff" stroke="#ef8a5d" stroke-width=".9"/><circle cx="1323.28" cy="611.4" r="1.35" fill="#fff" stroke="#ef8a5d" stroke-width=".9"/><circle cx="1330.53" cy="611.4" r="1.35" fill="#fff" stroke="#ef8a5d" stroke-width=".9"/><circle cx="1337.78" cy="611.4" r="1.35" fill="#fff" stroke="#ef8a5d" stroke-width=".9"/><circle cx="1345.02" cy="611.4" r="1.35" fill="#fff" stroke="#ef8a5d" stroke-width=".9"/><circle cx="1352.27" cy="611.4" r="1.35" fill="#fff" stroke="#ef8a5d" stroke-width=".9"/><circle cx="1359.52" cy="611.4" r="1.35" fill="#fff" stroke="#ef8a5d" stroke-width=".9"/><circle cx="1366.76" cy="611.4" r="1.35" fill="#fff" stroke="#ef8a5d" stroke-width=".9"/><circle cx="1374.01" cy="611.4" r="1.35" fill="#fff" stroke="#ef8a5d" stroke-width=".9"/><circle cx="1381.26" cy="611.4" r="1.35" fill="#fff" stroke="#ef8a5d" stroke-width=".9"/><circle cx="1388.51" cy="611.4" r="1.35" fill="#fff" stroke="#ef8a5d" stroke-width=".9"/><circle cx="1395.75" cy="611.4" r="1.35" fill="#fff" stroke="#ef8a5d" stroke-width=".9"/><circle cx="1403.00" cy="611.4" r="1.35" fill="#ef8a5d" stroke="#ef8a5d" stroke-width=".9"/><text x="1080" y="665.5" text-anchor="middle" font-size="12" font-weight="700" fill="#343741">per 10 seconds</text></svg></div>
<div class="pn" style="left:8px;top:684px;width:469px;height:412px;border-bottom-left-radius:0;border-bottom-right-radius:0"><div class="pt">Top Resource Groups</div><div class="a" style="left:0;top:0;width:469px;height:412px"><div class="a" style="left:-34px;top:205px;width:100px;height:14px;transform:rotate(-90deg);text-align:center;font-size:12px;line-height:14px;font-weight:700;color:#343741">Resource Groups</div><div class="a" style="left:40.5px;top:206px;font-size:10.6px;line-height:12px;color:#535966;transform:scaleX(.91);transform-origin:0 0">DEFAULTRESOURCEGROUP-WEU</div><div class="a" style="left:208px;top:28px;width:1px;height:368px;background:#eef0f3"></div><div class="a" style="left:209px;top:75px;width:260px;height:276px;background:#00a69b"></div><svg class="a" style="left:9px;top:391px" width="14" height="12" viewBox="0 0 14 12"><path d="M0.8 1.5h2.2M0.8 4.5h2.2M0.8 7.5h2.2M0.8 10.5h2.2M4.9 1.5h7.9M4.9 4.5h7.9M4.9 7.5h7.9M4.9 10.5h7.9" stroke="#343741" stroke-width="1.2"/></svg></div></div>
<div class="pn" style="left:485px;top:684px;width:499px;height:188px;border-bottom-left-radius:0;border-bottom-right-radius:0"><div class="pt">Resource Creations</div><div class="a" style="left:-27px;top:94px;width:84px;height:14px;transform:rotate(-90deg);text-align:center;font-size:12px;line-height:14px;font-weight:700;color:#343741">Resource type</div><div class="a" style="left:0;top:58px;width:255px;text-align:right;font-size:10.6px;line-height:12px;color:#535966;transform:scaleX(.926);transform-origin:255px 0">MICROSOFT.STORAGE/STORAGEACCOUNTS</div><div class="a" style="left:0;top:130px;width:255px;text-align:right;font-size:10.6px;line-height:12px;color:#535966;transform:scaleX(.926);transform-origin:255px 0">MICROSOFT.RESOURCES/DEPLOYMENTS</div><div class="a" style="left:264px;top:29px;width:1px;height:144px;background:#eef0f3"></div><div class="a" style="left:265px;top:38px;width:17px;height:54px;background:#00a69b"></div><div class="a" style="left:282.4px;top:38px;width:7.9px;height:54px;background:#5cbf7d"></div><div class="a" style="left:290.8px;top:38px;width:8.2px;height:54px;background:#6d86d8"></div><div class="a" style="left:265px;top:110px;width:12.8px;height:54px;background:#6a3dbd"></div><div class="a" style="left:307px;top:33px;width:8px;height:8px;border-radius:4px;background:#6a3dbd"></div><div class="a" style="left:323px;top:28.5px;font-size:12.8px;line-height:15px;color:#343741">Microsoft.Resources/de...</div><svg class="a" style="left:486px;top:30.5px" width="6" height="13" viewBox="0 0 6 13"><rect x="1.1" y="1" width="3.8" height="2.1" rx=".4" fill="none" stroke="#343741" stroke-width=".9"/><circle cx="3" cy="6.5" r="1.6" fill="#98a0aa"/><rect x="1.1" y="9.9" width="3.8" height="2.1" rx=".4" fill="none" stroke="#343741" stroke-width=".9"/></svg><div class="a" style="left:307px;top:55px;width:8px;height:8px;border-radius:4px;background:#6d86d8"></div><div class="a" style="left:323px;top:50.5px;font-size:12.8px;line-height:15px;color:#343741">Microsoft.Storage/stora...</div><svg class="a" style="left:486px;top:52.5px" width="6" height="13" viewBox="0 0 6 13"><rect x="1.1" y="1" width="3.8" height="2.1" rx=".4" fill="none" stroke="#343741" stroke-width=".9"/><circle cx="3" cy="6.5" r="1.6" fill="#98a0aa"/><rect x="1.1" y="9.9" width="3.8" height="2.1" rx=".4" fill="none" stroke="#343741" stroke-width=".9"/></svg><div class="a" style="left:307px;top:77px;width:8px;height:8px;border-radius:4px;background:#5cbf7d"></div><div class="a" style="left:323px;top:72.5px;font-size:12.8px;line-height:15px;color:#343741">Microsoft.Storage/stora...</div><svg class="a" style="left:486px;top:74.5px" width="6" height="13" viewBox="0 0 6 13"><rect x="1.1" y="1" width="3.8" height="2.1" rx=".4" fill="none" stroke="#343741" stroke-width=".9"/><circle cx="3" cy="6.5" r="1.6" fill="#98a0aa"/><rect x="1.1" y="9.9" width="3.8" height="2.1" rx=".4" fill="none" stroke="#343741" stroke-width=".9"/></svg><div class="a" style="left:307px;top:99px;width:8px;height:8px;border-radius:4px;background:#00a69b"></div><div class="a" style="left:323px;top:94.5px;font-size:12.8px;line-height:15px;color:#343741">Microsoft.Storage/stora...</div><svg class="a" style="left:486px;top:96.5px" width="6" height="13" viewBox="0 0 6 13"><rect x="1.1" y="1" width="3.8" height="2.1" rx=".4" fill="none" stroke="#343741" stroke-width=".9"/><circle cx="3" cy="6.5" r="1.6" fill="#98a0aa"/><rect x="1.1" y="9.9" width="3.8" height="2.1" rx=".4" fill="none" stroke="#343741" stroke-width=".9"/></svg><div class="a" style="left:4px;top:160px;width:24px;height:24px;border-radius:4px;background:#f1f4fa"></div><svg class="a" style="left:9px;top:166px" width="14" height="12" viewBox="0 0 14 12"><path d="M0.8 1.5h2.2M0.8 4.5h2.2M0.8 7.5h2.2M0.8 10.5h2.2M4.9 1.5h7.9M4.9 4.5h7.9M4.9 7.5h7.9M4.9 10.5h7.9" stroke="#343741" stroke-width="1.2"/></svg></div>
<div class="pn" style="left:485px;top:880px;width:499px;height:216px"><div class="pt">Resource Deletions</div><svg class="a" style="left:0;top:0" width="499" height="216" viewBox="485 880 499 216"><path d="M715.3 964 V995.5 Q715.3 1002.5 722.3 1002.5 H753.8" fill="none" stroke="#017d73" stroke-width="2.5"/><path d="M722.8 978.9 L735.2 968.9 L747.8 975.3" fill="none" stroke="#343741" stroke-width="1.4"/><circle cx="722.8" cy="978.9" r="3" fill="#fff" stroke="#343741" stroke-width="1.6"/><circle cx="735.2" cy="968.9" r="3" fill="#fff" stroke="#343741" stroke-width="1.6"/><circle cx="747.8" cy="975.3" r="3" fill="#fff" stroke="#343741" stroke-width="1.6"/><path d="M722.6 989.3 V997.5 M735.2 979.3 V997.5 M747.7 985.3 V997.5" stroke="#343741" stroke-width="2.4"/></svg><div class="a" style="left:0;top:140px;width:499px;text-align:center;font-size:12.8px;line-height:16px;color:#535966">No results found</div></div>
<div class="pn" style="left:993px;top:684px;width:439px;height:412px"><div class="pt">Top Resource Types</div><svg class="a" style="left:0;top:0" width="439" height="412" viewBox="993 684 439 412"><path d="M1112.9 901.2 L1112.90 790.10 A111.1 111.1 0 0 1 1129.46 1011.06 Z" fill="#00a69b" stroke="#fff" stroke-width="1.4" stroke-linejoin="round"/><path d="M1112.9 901.2 L1129.46 1011.06 A111.1 111.1 0 0 1 1050.32 809.40 Z" fill="#5cbf7d" stroke="#fff" stroke-width="1.4" stroke-linejoin="round"/><path d="M1112.9 901.2 L1050.32 809.40 A111.1 111.1 0 0 1 1112.90 790.10 Z" fill="#6d86d8" stroke="#fff" stroke-width="1.4" stroke-linejoin="round"/></svg><div class="a" style="left:240px;top:40.5px;width:8px;height:8px;border-radius:4px;background:#00a69b"></div><div class="a" style="left:256px;top:36.7px;font-size:12px;letter-spacing:-.15px;line-height:15px;color:#343741">MICROSOFT.STORAGE/...</div><svg class="a" style="left:418.5px;top:38.0px" width="6" height="13" viewBox="0 0 6 13"><rect x="1.1" y="1" width="3.8" height="2.1" rx=".4" fill="none" stroke="#343741" stroke-width=".9"/><circle cx="3" cy="6.5" r="1.6" fill="#98a0aa"/><rect x="1.1" y="9.9" width="3.8" height="2.1" rx=".4" fill="none" stroke="#343741" stroke-width=".9"/></svg><div class="a" style="left:240px;top:62.5px;width:8px;height:8px;border-radius:4px;background:#5cbf7d"></div><div class="a" style="left:256px;top:58.7px;font-size:12px;letter-spacing:-.15px;line-height:15px;color:#343741">MICROSOFT.RESOURCE...</div><svg class="a" style="left:418.5px;top:60.0px" width="6" height="13" viewBox="0 0 6 13"><rect x="1.1" y="1" width="3.8" height="2.1" rx=".4" fill="none" stroke="#343741" stroke-width=".9"/><circle cx="3" cy="6.5" r="1.6" fill="#98a0aa"/><rect x="1.1" y="9.9" width="3.8" height="2.1" rx=".4" fill="none" stroke="#343741" stroke-width=".9"/></svg><div class="a" style="left:240px;top:84.5px;width:8px;height:8px;border-radius:4px;background:#6d86d8"></div><div class="a" style="left:256px;top:80.7px;font-size:12px;letter-spacing:-.15px;line-height:15px;color:#343741">MICROSOFT.ADVISOR</div><svg class="a" style="left:418.5px;top:82.0px" width="6" height="13" viewBox="0 0 6 13"><rect x="1.1" y="1" width="3.8" height="2.1" rx=".4" fill="none" stroke="#343741" stroke-width=".9"/><circle cx="3" cy="6.5" r="1.6" fill="#98a0aa"/><rect x="1.1" y="9.9" width="3.8" height="2.1" rx=".4" fill="none" stroke="#343741" stroke-width=".9"/></svg><div class="a" style="left:4px;top:384px;width:24px;height:24px;border-radius:4px;background:#f1f4fa"></div><svg class="a" style="left:9px;top:390px" width="14" height="12" viewBox="0 0 14 12"><path d="M0.8 1.5h2.2M0.8 4.5h2.2M0.8 7.5h2.2M0.8 10.5h2.2M4.9 1.5h7.9M4.9 4.5h7.9M4.9 7.5h7.9M4.9 10.5h7.9" stroke="#343741" stroke-width="1.2"/></svg></div>

</body></html>
